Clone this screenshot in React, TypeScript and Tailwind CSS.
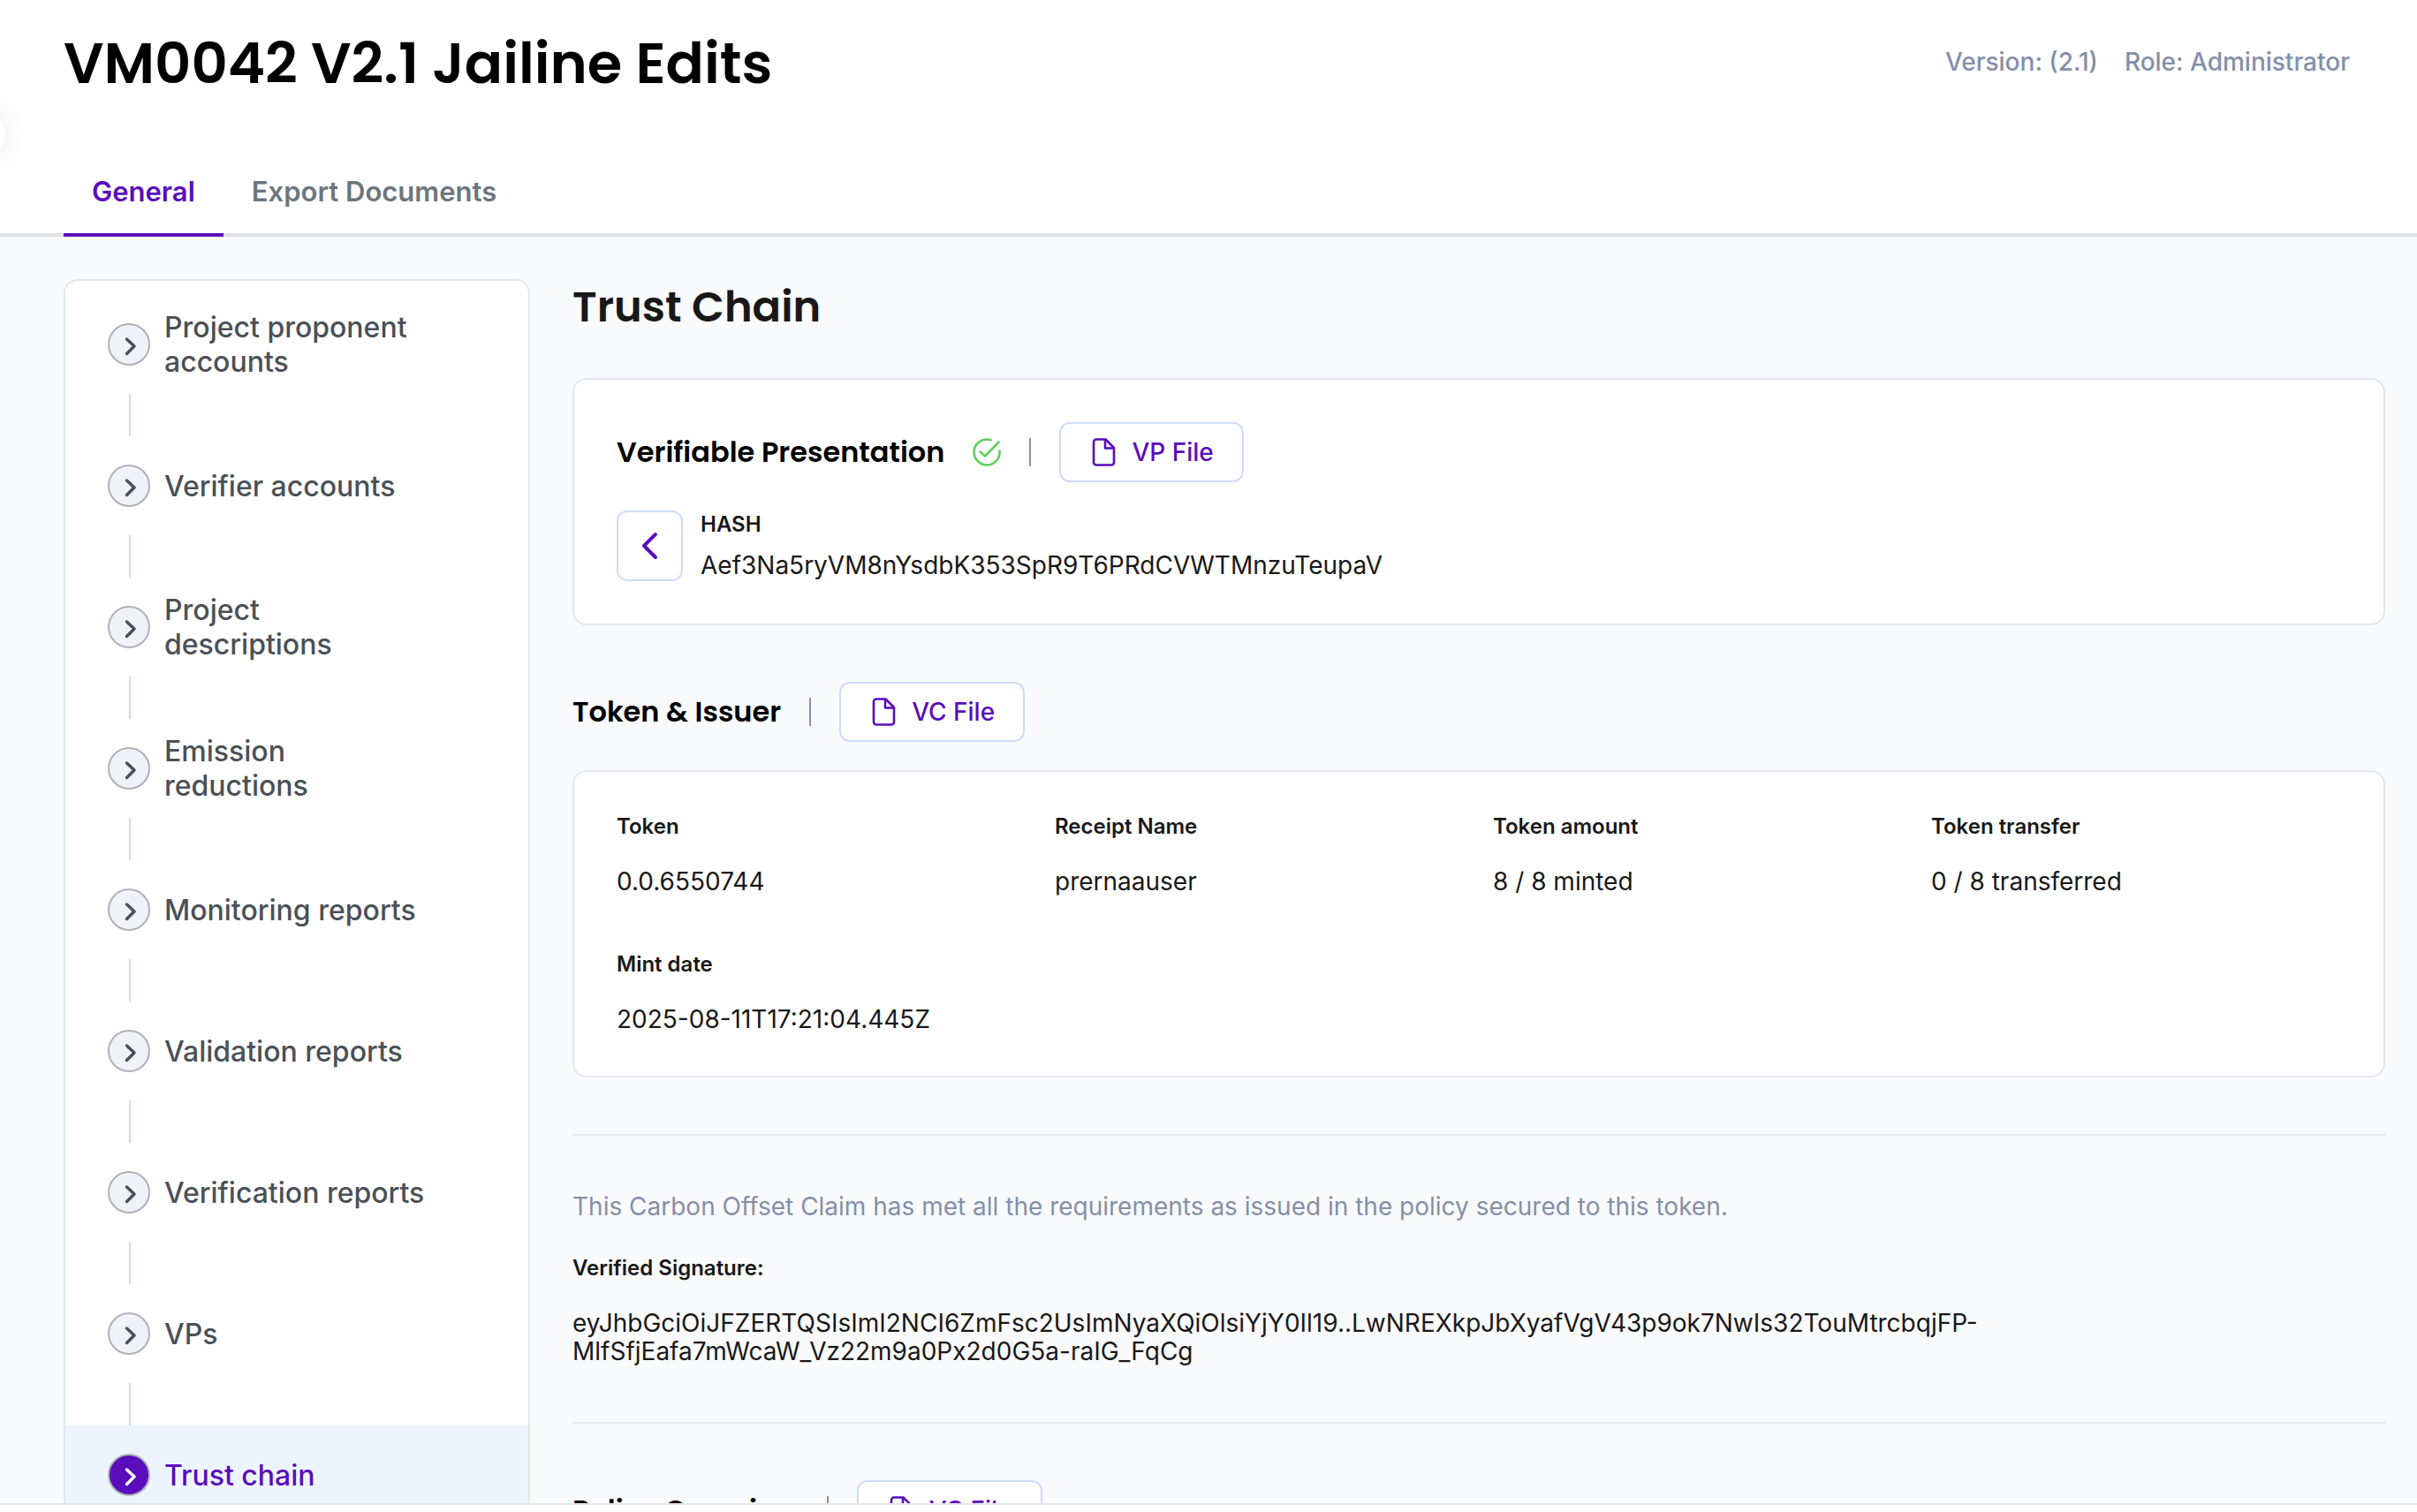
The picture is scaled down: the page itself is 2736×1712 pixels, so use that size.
import React from "react";

const steps: { label: string; wrap?: boolean }[] = [
  { label: "Project proponent accounts" },
  { label: "Verifier accounts" },
  { label: "Project descriptions", wrap: true },
  { label: "Emission reductions", wrap: true },
  { label: "Monitoring reports" },
  { label: "Validation reports" },
  { label: "Verification reports" },
  { label: "VPs" },
  { label: "Trust chain" },
];

const tokenFields = [
  ["Token", "0.0.6550744"],
  ["Receipt Name", "prernaauser"],
  ["Token amount", "8 / 8 minted"],
  ["Token transfer", "0 / 8 transferred"],
  ["Mint date", "2025-08-11T17:21:04.445Z"],
];

const heading = "font-[Poppins,Inter,sans-serif] font-semibold";

function FileIcon() {
  return (
    <svg viewBox="0 0 32 32" className="size-8" fill="none" stroke="currentColor" strokeWidth="2.6" strokeLinejoin="round" aria-hidden="true">
      <path d="M8 1.5h10.500L28 11v16.500a3 3 0 0 1-3 3H8a3 3 0 0 1-3-3v-23a3 3 0 0 1 3-3z" />
      <path d="M18 2v9.500h9.500" />
    </svg>
  );
}

function FileButton({ label }: { label: string }) {
  return (
    <button className="flex h-17 items-center gap-4 rounded-xl border-2 border-[#d0dbfb] bg-white px-8 text-[28px] font-medium text-[#5a0dbd]">
      <FileIcon />
      {label}
    </button>
  );
}

function Section({ title, file }: { title: string; file: string }) {
  return (
    <div className="flex items-center gap-8">
      <h3 className={`${heading} text-[32px] leading-8 text-black`}>{title}</h3>
      <span className="h-8 w-0.5 bg-[#848fa9]" />
      <FileButton label={file} />
    </div>
  );
}

function Step({ label, wrap, active, last }: { label: string; wrap?: boolean; active: boolean; last: boolean }) {
  return (
    <li>
      <button
        aria-current={active ? "step" : undefined}
        className={`flex h-28 w-full items-center gap-4 px-12 text-left text-[32px] leading-[39px] font-medium ${
          active ? "bg-[#edf4fd] text-[#5a0dbd]" : "text-[#4a5057]"
        }`}
      >
        <svg viewBox="0 0 48 48" className="size-12 shrink-0" aria-hidden="true">
          <circle cx="24" cy="24" r="23" fill={active ? "#5a0dbd" : "#eff3f9"} stroke="#aeb2b8" strokeWidth="2" />
          <path d="M21.500 18l8.500 8-8.500 8.500" fill="none" stroke={active ? "#ffffff" : "#4a5057"} strokeWidth="3.500" strokeLinecap="round" strokeLinejoin="round" />
        </svg>
        <span className={wrap ? "w-56" : "w-80"}>{label}</span>
      </button>
      {!last && <div className="ml-18 h-12 w-0.5 bg-[#d0dbfb]" />}
    </li>
  );
}

export default function App() {
  return (
    <div className="flex h-screen flex-col overflow-hidden bg-white font-[Inter,sans-serif] text-[#181818]">
      <div className="absolute top-31 -left-[50px] size-14 rounded-full bg-white shadow-[0_0_32px_rgba(0,0,0,0.08)]" />
      <header className="flex h-[184px] shrink-0 items-start justify-between pt-8 pr-19 pl-18">
        <h1 className={`${heading} text-[64px] leading-20 text-black`}>VM0042 V2.1 Jailine Edits</h1>
        <div className="flex gap-[30px] pt-5 text-[28px] leading-9 font-medium text-[#848fa9]">
          <span>Version: (2.1)</span>
          <span>Role: Administrator</span>
        </div>
      </header>
      <nav className="flex h-21 shrink-0 border-b-4 border-[#dee2e6] px-18">
        <a href="#general" className="-mb-1 flex items-start border-b-4 border-[#5a0dbd] px-8 pt-[13px] text-[31px] leading-10 font-semibold text-[#5a0dbd]">
          General
        </a>
        <a href="#export" className="flex items-start px-8 pt-[13px] text-[31px] leading-10 font-semibold text-[#6c757d]">
          Export Documents
        </a>
      </nav>
      <main className="flex min-h-0 flex-1 gap-12 overflow-hidden border-b-2 border-[#e1e7ec] bg-[#f9fafc] pt-12 pr-9 pl-18">
        <aside className="w-[528px] shrink-0 self-start rounded-2xl border-2 border-[#e1e7ec] bg-white pt-4">
          <ol>
            {steps.map((s, i) => (
              <Step key={s.label} {...s} active={s.label === "Trust chain"} last={i === steps.length - 1} />
            ))}
          </ol>
        </aside>
        <div className="min-w-0 flex-1">
          <h2 className={`${heading} text-[48px] leading-16 text-[#181818]`}>Trust Chain</h2>
          <section className="mt-12 rounded-2xl border-2 border-[#e1e7ec] bg-white p-12">
            <div className="flex items-center gap-8">
              <h3 className={`${heading} text-[32px] leading-8 text-black`}>Verifiable Presentation</h3>
              <svg viewBox="0 0 32 32" className="size-8" fill="none" stroke="#5bd05e" strokeWidth="2.600" strokeLinecap="round" strokeLinejoin="round" aria-hidden="true">
                <path d="M20.500 2.200A14.500 14.500 0 1 0 30.500 14.500" />
                <path d="M8.500 15.500l5.500 5L29.500 4.500" />
              </svg>
              <span className="h-8 w-0.5 bg-[#848fa9]" />
              <FileButton label="VP File" />
            </div>
            <div className="mt-8 flex items-start gap-5">
              <button aria-label="Back" className="flex h-20 w-[75px] items-center justify-center rounded-xl border-2 border-[#d0dbfb] bg-white text-[#5a0dbd]">
                <svg viewBox="0 0 20 32" className="h-8 w-5" fill="none" stroke="currentColor" strokeWidth="4" strokeLinecap="round" strokeLinejoin="round" aria-hidden="true">
                  <path d="M16 3L3 16l13 13" />
                </svg>
              </button>
              <div>
                <div className="text-[24px] leading-8 font-semibold">HASH</div>
                <div className="mt-3 text-[28px] leading-9">Aef3Na5ryVM8nYsdbK353SpR9T6PRdCVWTMnzuTeupaV</div>
              </div>
            </div>
          </section>
          <div className="mt-16">
            <Section title="Token &amp; Issuer" file="VC File" />
          </div>
          <section className="mt-8 rounded-2xl border-2 border-[#e1e7ec] bg-white p-12">
            <dl className="grid grid-cols-4 gap-x-8 gap-y-16">
              {tokenFields.map(([k, v]) => (
                <div key={k}>
                  <dt className="text-[24px] leading-7 font-semibold">{k}</dt>
                  <dd className="mt-8 text-[28px] leading-8">{v}</dd>
                </div>
              ))}
            </dl>
          </section>
          <section className="mt-16 border-y-2 border-[#e1e7ec] py-16">
            <p className="text-[28px] leading-8 text-[#848fa9]">
              This Carbon Offset Claim has met all the requirements as issued in the policy secured to this token.
            </p>
            <div className="mt-10 text-[24px] leading-7 font-semibold">Verified Signature:</div>
            <p className="mt-8 text-[28px] leading-8">
              eyJhbGciOiJFZERTQSIsImI2NCI6ZmFsc2UsImNyaXQiOlsiYjY0Il19..LwNREXkpJbXyafVgV43p9ok7NwIs32TouMtrcbqjFP-
              <br />
              MlfSfjEafa7mWcaW_Vz22m9a0Px2d0G5a-raIG_FqCg
            </p>
          </section>
          <div className="mt-16">
            <Section title="Policy Overview" file="VC File" />
          </div>
        </div>
      </main>
      <div className="h-2 shrink-0 bg-white" />
    </div>
  );
}
